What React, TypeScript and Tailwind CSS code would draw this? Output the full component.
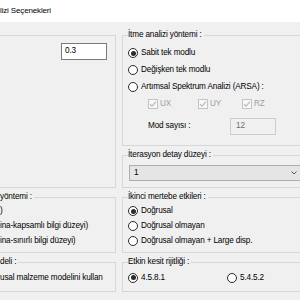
import React from 'react';

const Radio = ({ checked = false, label }: { checked?: boolean; label: string }) => (
    <div className="flex items-center gap-[3px]">
        <span className="w-[10px] h-[10px] rounded-full border border-[#2b2b2b] bg-white flex items-center justify-center shrink-0">
            {checked && <span className="w-[5px] h-[5px] rounded-full bg-[#2b2b2b]" />}
        </span>
        <span>{label}</span>
    </div>
);

const DisabledCheck = ({ label, width }: { label: string; width: string }) => (
    <div className={`flex items-center gap-[2px] text-[#a0a0a0] ${width}`}>
        <span className="w-[10px] h-[10px] border border-[#c4c4c4] bg-[#f7f7f7] flex items-center justify-center shrink-0">
            <svg width="8" height="8" viewBox="0 0 8 8">
                <path d="M1 4.2 L3 6.2 L7 1.6" fill="none" stroke="#b8b8b8" strokeWidth="1.1" />
            </svg>
        </span>
        <span>{label}</span>
    </div>
);

const App = () => {
    return (
        <div className="w-[300px] h-[300px] overflow-hidden bg-[#f0f0f0] font-['Liberation_Sans',Arial,sans-serif] text-[8.2px] tracking-[-0.15px] text-black whitespace-nowrap">
            <div className="h-[22px] bg-white flex items-center text-[8px]">lizi Seçenekleri</div>

            <div className="flex gap-[6px] pt-[7px]">
                {/* left column, its left edge lies outside the window */}
                <div className="-ml-[10px] w-[126px] shrink-0 flex flex-col gap-[3px]">
                    <div className="mt-[6px] h-[153px] border border-[#d7d7d7]">
                        <div className="flex justify-end pt-[7px] pr-[8px]">
                            <div className="w-[46px] h-[17px] border border-[#7a7a7a] bg-white flex items-center pl-[3px]">0.3</div>
                        </div>
                    </div>

                    <fieldset className="h-[62px] border border-[#d7d7d7]">
                        <legend className="ml-[9px] pr-[2px] h-[12px] leading-[12px]">yöntemi :</legend>
                        <div className="pl-[9px] pt-[1px]">
                            <div className="h-[15px] flex items-center">)</div>
                            <div className="h-[15px] flex items-center">ina-kapsamlı bilgi düzeyi)</div>
                            <div className="h-[15px] flex items-center">ina-sınırlı bilgi düzeyi)</div>
                        </div>
                    </fieldset>

                    <fieldset className="h-[36px] border border-[#d7d7d7]">
                        <legend className="ml-[9px] pr-[2px] h-[12px] leading-[12px]">deli :</legend>
                        <div className="pl-[9px] pt-[2px]">
                            <div className="h-[16px] flex items-center">usal malzeme modelini kullan</div>
                        </div>
                    </fieldset>
                </div>

                {/* right column */}
                <div className="w-[186px] shrink-0 flex flex-col gap-[3px]">
                    <fieldset className="h-[117px] border border-[#d7d7d7]">
                        <legend className="ml-[5px] pr-[2px] h-[12px] leading-[12px]">İtme analizi yöntemi :</legend>
                        <div className="pl-[5px] pt-[4px]">
                            <div className="h-[17px] flex items-center"><Radio checked label="Sabit tek modlu" /></div>
                            <div className="h-[17px] flex items-center"><Radio label="Değişken tek modlu" /></div>
                            <div className="h-[17px] flex items-center"><Radio label="Artımsal Spektrum Analizi (ARSA) :" /></div>
                            <div className="h-[17px] flex items-center pl-[20px]">
                                <DisabledCheck label="UX" width="w-[50px]" />
                                <DisabledCheck label="UY" width="w-[44px]" />
                                <DisabledCheck label="RZ" width="w-[40px]" />
                            </div>
                            <div className="mt-[5px] h-[17px] flex items-center pl-[20px]">
                                <span className="w-[82px]">Mod sayısı :</span>
                                <div className="w-[46px] h-[17px] border border-[#cccccc] bg-[#f0f0f0] text-[#6d6d6d] flex items-center pl-[5px]">12</div>
                            </div>
                        </div>
                    </fieldset>

                    <fieldset className="h-[39px] border border-[#d7d7d7]">
                        <legend className="ml-[5px] pr-[2px] h-[12px] leading-[12px]">İterasyon detay düzeyi :</legend>
                        <div className="pt-[4px] pl-[6px]">
                            <div className="w-[176px] h-[16px] border border-[#adadad] bg-[#e5e5e5] flex items-center justify-between pl-[4px] pr-[7px]">
                                <span>1</span>
                                <svg width="6" height="4" viewBox="0 0 6 4">
                                    <path d="M0.5 0.5 L3 3 L5.5 0.5" fill="none" stroke="#555" strokeWidth="1" />
                                </svg>
                            </div>
                        </div>
                    </fieldset>

                    <fieldset className="h-[62px] border border-[#d7d7d7]">
                        <legend className="ml-[5px] pr-[2px] h-[12px] leading-[12px]">İkinci mertebe etkileri :</legend>
                        <div className="pl-[5px] pt-[1px]">
                            <div className="h-[15px] flex items-center"><Radio checked label="Doğrusal" /></div>
                            <div className="h-[15px] flex items-center"><Radio label="Doğrusal olmayan" /></div>
                            <div className="h-[15px] flex items-center"><Radio label="Doğrusal olmayan + Large disp." /></div>
                        </div>
                    </fieldset>

                    <fieldset className="h-[36px] border border-[#d7d7d7]">
                        <legend className="ml-[5px] pr-[2px] h-[12px] leading-[12px]">Etkin kesit rijitliği :</legend>
                        <div className="pl-[5px] pt-[2px] h-[16px] flex items-center box-content">
                            <div className="w-[99px]"><Radio checked label="4.5.8.1" /></div>
                            <Radio label="5.4.5.2" />
                        </div>
                    </fieldset>
                </div>
            </div>
        </div>
    );
};

export default App;
